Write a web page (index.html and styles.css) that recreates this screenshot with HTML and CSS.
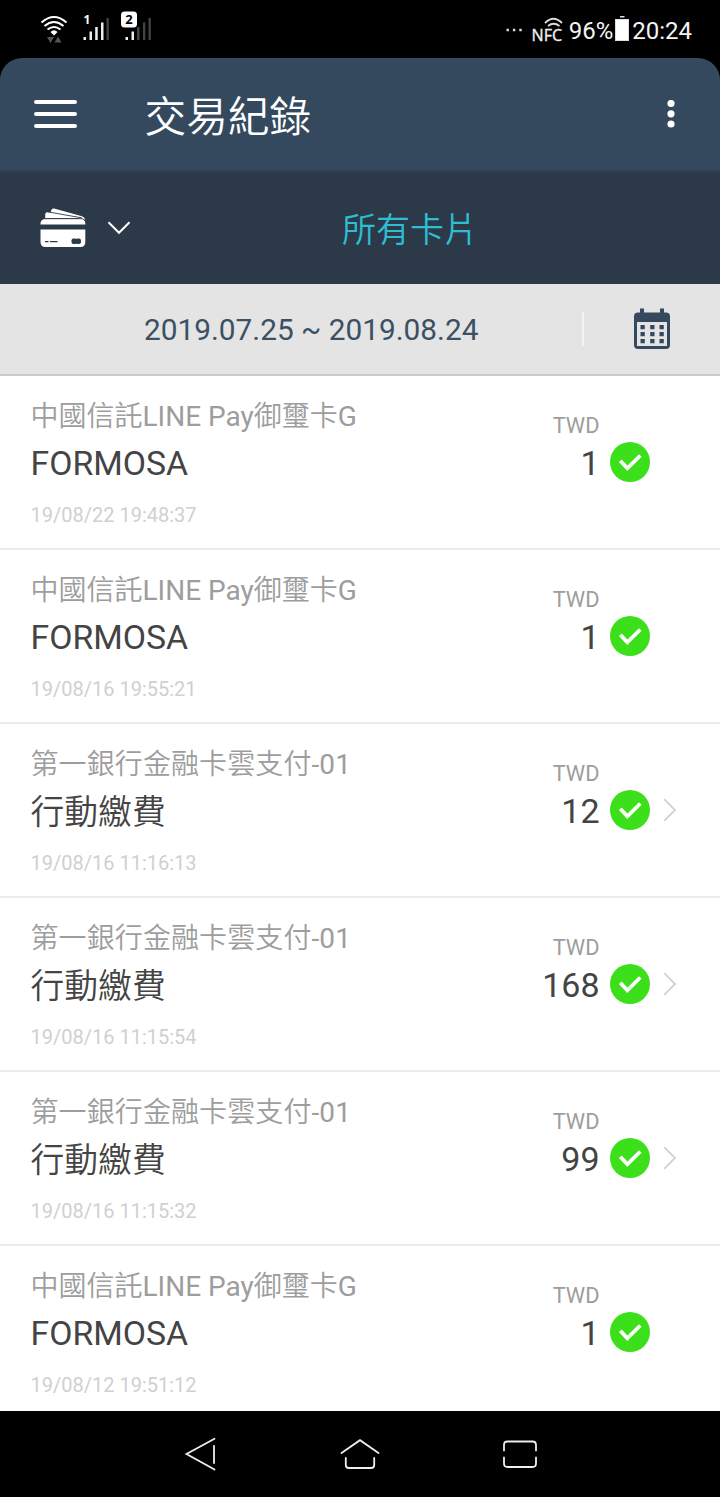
FILE: index.html
```
<!DOCTYPE html>
<html lang="zh-Hant">
<head>
<meta charset="utf-8">
<title>交易紀錄</title>
<link rel="stylesheet" href="styles.css">
</head>
<body>
<svg class="defs" width="0" height="0">
  <symbol id="check" viewBox="0 0 40 40"><circle cx="20" cy="20" r="20" fill="#3be01b"/><path d="M10.300 18.800l7 7.500 13-12.800" fill="none" stroke="#fff" stroke-width="3.800"/></symbol>
  <symbol id="chevron" viewBox="0 0 14 24"><path d="M1.200 1.200L12 12 1.200 22.800" fill="none" stroke="#d2d2d2" stroke-width="1.800"/></symbol>
</svg>
<div class="screen">
  <div class="status">
    <svg class="status-left" width="120" height="34" viewBox="40 10 120 34">
      <g fill="none" stroke="#fff" stroke-width="2">
        <path d="M41.500 22.500Q54 11.500 66.500 22.500"/><path d="M44.500 26Q54 18 63.500 26"/><path d="M47.500 29.500Q54 24.500 60.500 29.500"/>
      </g>
      <path d="M50.500 32q3.500-3.500 7 0l-3.500 3.500z" fill="#fff"/>
      <path d="M47 37h7l-3.500 6zM54.500 42.500h7l-3.500-6z" fill="#555"/>
      <g fill="#eee"><path d="M83.500 37h2.500v3h-2.500zM89.500 31.500h2.500v8.500h-2.500zM95.200 27h2.500v13h-2.500zM101 22.500h2.500v17.500h-2.500z"/><path fill="#444" d="M106.500 18h2.300v22h-2.300z"/></g>
      <g fill="#eee"><path d="M125.500 37h2.500v3h-2.500zM131.500 31.500h2.500v8.500h-2.500z"/><path fill="#444" d="M137 27h2.500v13h-2.500zM143 22.500h2.300v17.500h-2.300zM148.500 18h2.300v22h-2.300z"/></g>
      <rect x="121" y="11.500" width="16" height="16" rx="3.500" fill="#fff"/>
      <text class="sim" x="87" y="23.500" fill="#fff">1</text>
      <text class="sim sim-2" x="129" y="24" fill="#000">2</text>
    </svg>
    <div class="status-right">
      <svg width="18" height="4" viewBox="0 0 18 4"><path d="M1.500.800h2.400v2.400H1.500zM7.900.800h2.400v2.400H7.900zM14.300.800h2.400v2.400h-2.400z" fill="#ddd"/></svg>
      <svg class="nfc" width="31" height="28" viewBox="531 14 31 28"><path d="M545 22q8.500-8.500 17 0M548 25q5.500-4.500 11.500 0" fill="none" stroke="#ddd" stroke-width="1.800"/><text x="531.500" y="40" class="nfc-text">NFC</text></svg>
      <span class="percent">96%</span>
      <svg class="battery" width="14" height="26" viewBox="0 0 14 26"><path d="M5 1h4.500v1.500H5zM0 4h14v22H0z" fill="#ddd"/><path d="M1 5h12v20H1z" fill="#fff"/></svg>
      <span class="clock">20:24</span>
    </div>
  </div>
  <header class="header">
    <svg class="menu" width="44" height="30" viewBox="0 0 44 30"><path d="M2 3h39M2 15h39M2 27h39" stroke="#fff" stroke-width="4" stroke-linecap="round"/></svg>
    <h1>交易紀錄</h1>
    <svg class="more" width="8" height="28" viewBox="0 0 8 28"><g fill="#fff"><circle cx="4" cy="3.500" r="3.600"/><circle cx="4" cy="13.800" r="3.600"/><circle cx="4" cy="24" r="3.600"/></g></svg>
  </header>
  <div class="filter">
    <svg class="cards" width="46" height="40" viewBox="0 0 46 40">
      <path fill="#fff" d="M10.500 4.500l1-2.800q.800-1.600 2.600-1.200L42 8.200q3 1 3.300 3.800zM5.200 10.300V7q0-3.200 3.200-2.700L41 9.300 43.500 10.300zM.500 16.500v-1.800q1-3.700 5-3.700H40q5 0 5.300 4v1.500zM.500 21.500h44.800V34q0 5-5 5H5.500q-5 0-5-5z"/>
      <path d="M8 3.900l34 6M5 10.700h37q3 .300 4 3.500" stroke="#2b3949" stroke-width=".900" fill="none"/>
      <g fill="#2b3949"><rect x="31.500" y="30.500" width="5.500" height="5.500" rx="2"/><rect x="35.500" y="30.500" width="5.500" height="5.500" rx="2"/><path d="M5 33h3.500v1.300H5zM10 33h7.500v1.300H10z"/></g>
    </svg>
    <svg class="down" width="24" height="14" viewBox="0 0 24 14"><path d="M1.500 1.200l10.500 10.600L22.500 1.200" fill="none" stroke="#fff" stroke-width="2"/></svg>
    <span class="filter-name">所有卡片</span>
  </div>
  <div class="dates">
    <span class="range">2019.07.25 ~ 2019.08.24</span>
    <span class="divider"></span>
    <svg class="calendar" width="36" height="42" viewBox="0 0 36 42"><path fill="#34495e" fill-rule="evenodd" d="M6 .500h4v4h16v-4h4v4h2q4 0 4 4V37q0 4-4 4H4q-4 0-4-4V8.500q0-4 4-4h2zM3 14v24h30V14z"/><path fill="#34495e" d="M6.500 17h4.300v4.300H6.500zM16.200 17h4.300v4.300h-4.300zM25.500 17h4.300v4.300h-4.300zM6.500 24h4.300v4.300H6.500zM16.200 24h4.300v4.300h-4.300zM25.500 24h4.300v4.300h-4.300zM6.500 31h4.300v4.300H6.500zM16.200 31h4.300v4.300h-4.300zM25.500 31h4.300v4.300h-4.300z"/></svg>
  </div>
  <main class="list">
    <div class="row"><div class="info"><div class="card">中國信託LINE Pay御璽卡G</div><div class="shop">FORMOSA</div><div class="time">19/08/22 19:48:37</div></div><div class="money"><div class="unit">TWD</div><div class="amount">1</div></div><svg class="check"><use href="#check"/></svg></div>
    <div class="row"><div class="info"><div class="card">中國信託LINE Pay御璽卡G</div><div class="shop">FORMOSA</div><div class="time">19/08/16 19:55:21</div></div><div class="money"><div class="unit">TWD</div><div class="amount">1</div></div><svg class="check"><use href="#check"/></svg></div>
    <div class="row"><div class="info"><div class="card wide">第一銀行金融卡雲支付-01</div><div class="shop han">行動繳費</div><div class="time">19/08/16 11:16:13</div></div><div class="money"><div class="unit">TWD</div><div class="amount">12</div></div><svg class="check"><use href="#check"/></svg><svg class="chevron"><use href="#chevron"/></svg></div>
    <div class="row"><div class="info"><div class="card wide">第一銀行金融卡雲支付-01</div><div class="shop han">行動繳費</div><div class="time">19/08/16 11:15:54</div></div><div class="money"><div class="unit">TWD</div><div class="amount">168</div></div><svg class="check"><use href="#check"/></svg><svg class="chevron"><use href="#chevron"/></svg></div>
    <div class="row"><div class="info"><div class="card wide">第一銀行金融卡雲支付-01</div><div class="shop han">行動繳費</div><div class="time">19/08/16 11:15:32</div></div><div class="money"><div class="unit">TWD</div><div class="amount">99</div></div><svg class="check"><use href="#check"/></svg><svg class="chevron"><use href="#chevron"/></svg></div>
    <div class="row"><div class="info"><div class="card">中國信託LINE Pay御璽卡G</div><div class="shop">FORMOSA</div><div class="time">19/08/12 19:51:12</div></div><div class="money"><div class="unit">TWD</div><div class="amount">1</div></div><svg class="check"><use href="#check"/></svg></div>
  </main>
  <nav class="nav">
    <svg width="34" height="36" viewBox="0 0 34 36"><path d="M31.500 2.700L3.500 18 31.500 33.500M31 10v17" /></svg>
    <svg width="40" height="36" viewBox="0 0 40 36"><path d="M1.500 17L20 4.200 38.500 17M5.800 22v7q0 3 3 3h22.400q3 0 3-3v-7"/></svg>
    <svg width="36" height="36" viewBox="0 0 36 36"><path d="M2 14.500V9q0-3.500 3.500-3.500h25Q34 5.500 34 9v5.500M2 21.500v6Q2 31 5.500 31h25q3.500 0 3.500-3.500v-6"/></svg>
  </nav>
</div>
</body>
</html>
```
FILE: styles.css
```
* { box-sizing: border-box; }
body { margin: 0; background: #000; font-family: Roboto, "Noto Sans CJK TC DemiLight", "Noto Sans CJK TC", sans-serif; }
svg { display: block; flex: none; }
.defs { position: absolute; }
.screen { width: 720px; height: 1497px; display: flex; flex-direction: column; overflow: hidden; background: #000; }
.status { height: 58px; flex: none; display: flex; justify-content: space-between; padding: 10px 28px 0 40px; color: #f4f4f4; }
.status-right { display: flex; align-items: center; height: 40px; font-size: 24px; line-height: 40px; }
.nfc { margin: -3px 0 0 8px; overflow: visible; }
.nfc-text { font: 16px "Noto Sans", sans-serif; fill: #eee; stroke: #eee; stroke-width: .3px; }
.percent, .clock { padding-top: 1px; }
.percent { margin-left: 7px; }
.battery { margin: -4px 3px 0 2px; }
.sim { font: bold 12px "Noto Sans", sans-serif; text-anchor: middle; }
.sim-2 { font-size: 13px; }
.header { height: 112px; flex: none; display: flex; align-items: center; background: #34495e; border-radius: 22px 22px 0 0; padding: 0 45px 0 34px; }
.header h1 { margin: 7px 0 0 66.500px; flex: 1; font-size: 41.700px; line-height: 60px; font-weight: 350; color: #fff; }
.menu { margin-top: -1px; }
.filter { height: 114px; flex: none; display: flex; align-items: center; background: #2b3949; border-top: 2px solid #2e4054; padding-left: 40px; }
.down { margin-left: 21px; }
.filter-name { margin: 4px 0 0 211px; font-size: 34px; line-height: 50px; font-weight: 350; color: #2ebdd2; }
.dates { height: 92px; flex: none; display: flex; align-items: center; background: #e4e4e4; border-bottom: 2px solid #cbcbcb; padding-left: 144px; }
.range { width: 438px; font-size: 29.800px; line-height: 40px; color: #3c5064; padding-top: 2px; }
.divider { width: 2px; height: 34px; background: #f3f3f3; }
.calendar { margin-left: 50px; }
.list { height: 1035px; flex: none; overflow: hidden; background: #fff; }
.row { height: 174px; display: flex; border-bottom: 2px solid #ececec; padding-left: 30.500px; background: #fff; }
.info { width: 419.500px; padding-top: 20px; }
.card { font-size: 28px; line-height: 41px; color: #9d9d9d; }
.wide { letter-spacing: .100px; }
.shop { font-size: 33.800px; line-height: 53px; color: #444; }
.han { font-weight: 350; line-height: 55px; margin-bottom: -2px; }
.time { font-size: 20px; line-height: 50px; color: #d0d0d0; }
.money { width: 149.500px; padding-top: 36px; text-align: right; }
.unit { font-size: 21.800px; line-height: 27px; color: #9d9d9d; }
.amount { font-size: 34px; line-height: 49px; color: #444; }
.check { width: 40px; height: 40px; margin: 66px 0 0 10.500px; }
.chevron { width: 14px; height: 24px; margin: 74px 0 0 13px; }
.nav { height: 86px; flex: none; display: flex; justify-content: space-between; padding: 25px 182px 0 183px; }
.nav path { fill: none; stroke: #eee; stroke-width: 1.800; stroke-linecap: round; }
```
